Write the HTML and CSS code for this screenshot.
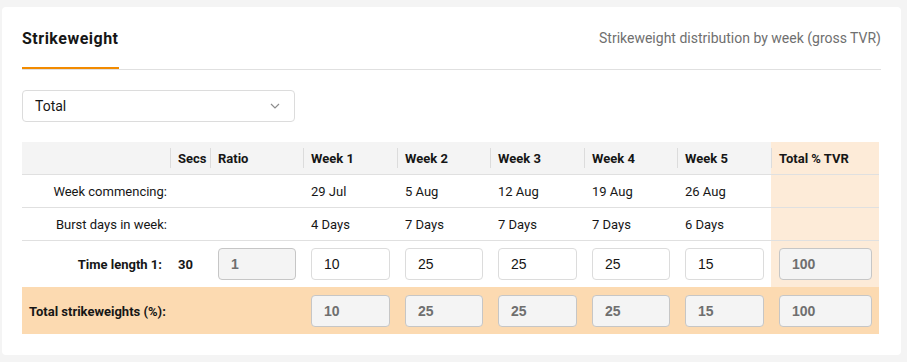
FILE: index.html
```html
<!DOCTYPE html>
<html lang="en">
<head>
    <meta charset="UTF-8">
    <meta name="viewport" content="width=device-width, initial-scale=1.0">
    <title>Strikeweight</title>
    <link rel="stylesheet" href="styles.css">
</head>
<body>

    <div class="card">
        <!-- Card Header -->
        <div class="card-head">
            <div class="tab">Strikeweight</div>
            <div class="subtitle">Strikeweight distribution by week (gross TVR)</div>
        </div>

        <!-- Audience Select -->
        <div class="select-box">
            <span>Total</span>
            <svg width="10" height="6" viewBox="0 0 10 6"><path d="M1 1l4 4 4-4" fill="none" stroke="#8d8d8d" stroke-width="1.2"/></svg>
        </div>

        <!-- Strikeweight Table -->
        <table class="sw-table">
            <colgroup>
                <col style="width:148px">
                <col style="width:40px">
                <col style="width:93px">
                <col style="width:94px">
                <col style="width:93px">
                <col style="width:94px">
                <col style="width:93px">
                <col style="width:94px">
                <col style="width:108px">
            </colgroup>
            <thead>
                <tr>
                    <th class="label"></th>
                    <th class="sep">Secs</th>
                    <th class="sep">Ratio</th>
                    <th class="sep">Week 1</th>
                    <th class="sep">Week 2</th>
                    <th class="sep">Week 3</th>
                    <th class="sep">Week 4</th>
                    <th class="sep">Week 5</th>
                    <th class="sep total-col">Total % TVR</th>
                </tr>
            </thead>
            <tbody>
                <tr class="info-row">
                    <td class="label">Week commencing:</td>
                    <td></td>
                    <td></td>
                    <td>29 Jul</td>
                    <td>5 Aug</td>
                    <td>12 Aug</td>
                    <td>19 Aug</td>
                    <td>26 Aug</td>
                    <td class="total-col"></td>
                </tr>
                <tr class="info-row">
                    <td class="label">Burst days in week:</td>
                    <td></td>
                    <td></td>
                    <td>4 Days</td>
                    <td>7 Days</td>
                    <td>7 Days</td>
                    <td>7 Days</td>
                    <td>6 Days</td>
                    <td class="total-col"></td>
                </tr>
                <tr class="input-row">
                    <td class="label strong">Time length 1:</td>
                    <td class="strong">30</td>
                    <td><input type="text" value="1" disabled></td>
                    <td><input type="text" value="10"></td>
                    <td><input type="text" value="25"></td>
                    <td><input type="text" value="25"></td>
                    <td><input type="text" value="25"></td>
                    <td><input type="text" value="15"></td>
                    <td class="total-col"><input type="text" value="100" disabled></td>
                </tr>
                <tr class="input-row sum-row">
                    <td colspan="3" class="strong">Total strikeweights (%):</td>
                    <td><input type="text" value="10" disabled></td>
                    <td><input type="text" value="25" disabled></td>
                    <td><input type="text" value="25" disabled></td>
                    <td><input type="text" value="25" disabled></td>
                    <td><input type="text" value="15" disabled></td>
                    <td><input type="text" value="100" disabled></td>
                </tr>
            </tbody>
        </table>
    </div>

</body>
</html>
```

FILE: styles.css
```css
body { font-family: Roboto, "Liberation Sans", sans-serif; margin: 0; padding: 7px 6px 0 2px; background: #f4f4f4; color: #161616; }

/* Card */
.card {
    background: white;
    border-radius: 4px;
    padding: 18px 20px 21px;
}

/* Card Header */
.card-head {
    display: flex;
    justify-content: space-between;
    align-items: flex-start;
    border-bottom: 1px solid #e0e0e0;
}
.tab {
    font-size: 16px;
    font-weight: bold;
    letter-spacing: 0.5px;
    line-height: 24px;
    padding: 2px 0 16px;
    border-bottom: 2px solid #f28b00;
}
.subtitle { font-size: 14px; color: #6f6f6f; line-height: 20px; padding-top: 3px; }

/* Select */
.select-box {
    width: 273px;
    height: 32px;
    box-sizing: border-box;
    margin: 20px 0;
    padding: 0 14px 0 12px;
    border: 1px solid #dcdcdc;
    border-radius: 4px;
    display: flex;
    justify-content: space-between;
    align-items: center;
    font-size: 14px;
}

/* Table */
.sw-table { width: 857px; table-layout: fixed; border-collapse: collapse; font-size: 13px; }
.sw-table th, .sw-table td { padding: 0 7px 0 8px; text-align: left; }
.sw-table th { height: 32px; background: #f4f4f4; font-weight: bold; position: relative; border-bottom: 1px solid #e0e0e0; }
.sw-table th.sep::before { content: ""; position: absolute; left: 0; top: 6px; bottom: 6px; width: 1px; background: #dcdcdc; }
.info-row td { height: 32px; border-bottom: 1px solid #e0e0e0; }
.sw-table .label { text-align: right; padding-right: 3px; }
.sw-table .label.strong { padding-right: 8px; }
.strong { font-weight: bold; }
.total-col { background: #fdebd8 !important; }
.input-row td { padding-top: 7px; padding-bottom: 7px; }
.sum-row td { background: #fcdab1; padding-top: 8px; }
.sum-row td.strong { padding-left: 7px; }

/* Inputs */
input {
    width: 100%;
    height: 32px;
    box-sizing: border-box;
    padding: 0 12px;
    border: 1px solid #dcdcdc;
    border-radius: 4px;
    background: white;
    font-family: "Liberation Sans", Arial, sans-serif;
    font-size: 14px;
    color: #161616;
}
input:disabled { background: #f4f4f4; border-color: #c6c6c6; color: #6f6f6f; font-weight: bold; }
```
